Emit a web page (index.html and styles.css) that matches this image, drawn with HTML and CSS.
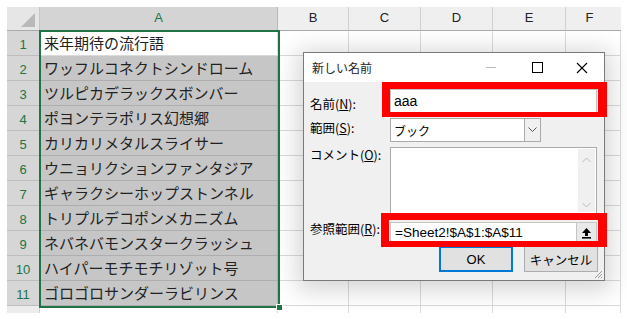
FILE: index.html
```html
<!DOCTYPE html>
<html lang="ja">
<head>
    <meta charset="UTF-8">
    <title>新しい名前</title>
    <link rel="stylesheet" href="styles.css">
</head>
<body>
    <div class="page">
        <div class="sheet">
            <div class="corner"><span class="tri"></span></div>
            <div class="colhead sel">A</div>
            <div class="colhead">B</div>
            <div class="colhead">C</div>
            <div class="colhead">D</div>
            <div class="colhead">E</div>
            <div class="colhead last">F</div>

            <div class="rowhead">1</div><div class="cell active">来年期待の流行語</div><div class="cell"></div><div class="cell"></div><div class="cell"></div><div class="cell"></div><div class="cell"></div>
            <div class="rowhead">2</div><div class="cell on">ワッフルコネクトシンドローム</div><div class="cell"></div><div class="cell"></div><div class="cell"></div><div class="cell"></div><div class="cell"></div>
            <div class="rowhead">3</div><div class="cell on">ツルピカデラックスボンバー</div><div class="cell"></div><div class="cell"></div><div class="cell"></div><div class="cell"></div><div class="cell"></div>
            <div class="rowhead">4</div><div class="cell on">ポヨンテラポリス幻想郷</div><div class="cell"></div><div class="cell"></div><div class="cell"></div><div class="cell"></div><div class="cell"></div>
            <div class="rowhead">5</div><div class="cell on">カリカリメタルスライサー</div><div class="cell"></div><div class="cell"></div><div class="cell"></div><div class="cell"></div><div class="cell"></div>
            <div class="rowhead">6</div><div class="cell on">ウニョリクションファンタジア</div><div class="cell"></div><div class="cell"></div><div class="cell"></div><div class="cell"></div><div class="cell"></div>
            <div class="rowhead">7</div><div class="cell on">ギャラクシーホップストンネル</div><div class="cell"></div><div class="cell"></div><div class="cell"></div><div class="cell"></div><div class="cell"></div>
            <div class="rowhead">8</div><div class="cell on">トリプルデコポンメカニズム</div><div class="cell"></div><div class="cell"></div><div class="cell"></div><div class="cell"></div><div class="cell"></div>
            <div class="rowhead">9</div><div class="cell on">ネバネバモンスタークラッシュ</div><div class="cell"></div><div class="cell"></div><div class="cell"></div><div class="cell"></div><div class="cell"></div>
            <div class="rowhead">10</div><div class="cell on">ハイパーモチモチリゾット号</div><div class="cell"></div><div class="cell"></div><div class="cell"></div><div class="cell"></div><div class="cell"></div>
            <div class="rowhead">11</div><div class="cell on">ゴロゴロサンダーラビリンス</div><div class="cell"></div><div class="cell"></div><div class="cell"></div><div class="cell"></div><div class="cell"></div>
            <div class="rowhead stub"></div><div class="cell stub"></div><div class="cell stub"></div><div class="cell stub"></div><div class="cell stub"></div><div class="cell stub"></div><div class="cell stub"></div>
        </div>

        <div class="selection"><span class="handle"></span></div>

        <div class="dialog">
            <div class="titlebar">
                <span class="title">新しい名前</span>
                <span class="tb-btn min"></span>
                <span class="tb-btn max"><span class="box"></span></span>
                <span class="tb-btn close">
                    <svg width="12" height="12" viewBox="0 0 12 12"><path d="M1 1 L11 11 M11 1 L1 11" stroke="#000" stroke-width="1.1"/></svg>
                </span>
            </div>
            <div class="body">
                <div class="row r-name">
                    <label>名前(<u>N</u>):</label>
                    <div class="field wide">aaa</div>
                </div>
                <div class="row r-scope">
                    <label>範囲(<u>S</u>):</label>
                    <div class="field select">
                        <span class="val">ブック</span>
                        <span class="drop">
                            <svg width="9" height="6" viewBox="0 0 9 6"><path d="M0.5 0.5 L4.5 4.5 L8.5 0.5" fill="none" stroke="#555" stroke-width="1"/></svg>
                        </span>
                    </div>
                </div>
                <div class="row r-comment">
                    <label>コメント(<u>O</u>):</label>
                    <div class="field area">
                        <div class="scroll">
                            <svg width="9" height="6" viewBox="0 0 9 6"><path d="M0.5 5 L4.5 1 L8.5 5" fill="none" stroke="#bbb" stroke-width="1"/></svg>
                            <svg width="9" height="6" viewBox="0 0 9 6"><path d="M0.5 1 L4.5 5 L8.5 1" fill="none" stroke="#bbb" stroke-width="1"/></svg>
                        </div>
                    </div>
                </div>
                <div class="row r-ref">
                    <label>参照範囲(<u>R</u>):</label>
                    <div class="field wide ref">
                        <span class="val">=Sheet2!$A$1:$A$11</span>
                        <span class="pick">
                            <svg width="11" height="12" viewBox="0 0 11 12"><path d="M5.5 1 L10 6 H7 V9 H4 V6 H1 Z" fill="#000"/><rect x="1" y="10" width="9" height="1.6" fill="#000"/></svg>
                        </span>
                    </div>
                </div>
                <div class="buttons">
                    <button class="btn ok">OK</button>
                    <button class="btn">キャンセル</button>
                </div>
            </div>
            <span class="grip">
                <svg width="10" height="10" viewBox="0 0 10 10"><path d="M9 2 L2 9 M9 5 L5 9 M9 8 L8 9" stroke="#999" stroke-width="1"/></svg>
            </span>
        </div>

        <div class="mark mark-name"></div>
        <div class="mark mark-ref"></div>
    </div>
</body>
</html>
```

FILE: styles.css
```css
*{
    margin:0;
    padding:0;
    box-sizing:border-box;
}
body{
    background:#fff;
    font-family:"Noto Sans CJK JP","Noto Sans",sans-serif;
    color:#222;
}
.page{
    position:relative;
    width:627px;
    height:319px;
    overflow:hidden;
    padding:7px 0 0 7px;
}
.sheet{
    display:grid;
    grid-template-columns:33px 238px 71px 72px 72px 73px 55px;
    grid-template-rows:24px repeat(11,25px) 7px;
}
.corner{
    position:relative;
    background:#e6e6e6;
    border-right:1px solid #c6c6c6;
    border-bottom:1px solid #ababab;
}
.tri{
    position:absolute;
    right:4px;
    bottom:3px;
    width:0;
    height:0;
    border-left:14px solid transparent;
    border-bottom:14px solid #b9b9b9;
}
.colhead{
    background:#efefef;
    border-right:1px solid #d0d0d0;
    border-bottom:1px solid #ababab;
    font-family:"Liberation Sans",Arial,sans-serif;
    font-size:13px;
    color:#222;
    display:flex;
    align-items:center;
    justify-content:center;
    padding-bottom:2px;
}
.colhead.sel{
    background:#d4d4d4;
    color:#217346;
    border-right:1px solid #b8b8b8;
}
.colhead.last{
    border-right:none;
    padding-right:8px;
}
.rowhead{
    background:#d6d6d6;
    border-right:1px solid #b8b8b8;
    border-bottom:1px solid #bdbdbd;
    color:#217346;
    font-family:"Liberation Sans",Arial,sans-serif;
    font-size:13px;
    display:flex;
    align-items:center;
    justify-content:center;
    padding-top:2px;
}
.rowhead.stub{
    background:#ececec;
    border-bottom:none;
    border-right:1px solid #d0d0d0;
}
.cell{
    border-right:1px solid #dadada;
    border-bottom:1px solid #dadada;
    font-size:15px;
    line-height:24px;
    padding-left:4px;
    white-space:nowrap;
    overflow:hidden;
    color:#222;
}
.cell.on{
    background:#c6c6c6;
    border-right-color:#b0b0b0;
    border-bottom-color:#aeaeae;
}
.cell.active{
    background:#fff;
}
.cell.stub{
    border-bottom:none;
}

.selection{
    position:absolute;
    left:39px;
    top:30px;
    width:241px;
    height:278px;
    border:2px solid #217346;
}
.handle{
    position:absolute;
    right:-5px;
    bottom:-5px;
    width:7px;
    height:7px;
    background:#217346;
    border:1px solid #fff;
}

/* dialog */
.dialog{
    position:absolute;
    left:303px;
    top:52px;
    width:302px;
    height:229px;
    background:#f0f0f0;
    border:1px solid #7a7a7a;
    box-shadow:0 4px 22px 6px rgba(0,0,0,.16);
    font-family:"Noto Sans CJK JP","Noto Sans",sans-serif;
    color:#000;
    font-size:12px;
}
.titlebar{
    height:29px;
    background:#fff;
    display:flex;
    align-items:center;
    padding-left:8px;
}
.title{
    flex:1;
    font-size:12px;
    color:#222;
}
.tb-btn{
    width:46px;
    height:29px;
    display:flex;
    align-items:center;
    justify-content:center;
}
.tb-btn.min::before{
    content:"";
    width:10px;
    height:1px;
    background:#bbb;
}
.tb-btn.max .box{
    width:11px;
    height:11px;
    border:1px solid #000;
}
.tb-btn.close{
    width:44px;
}
.body{
    position:relative;
    padding:0 6px 0 6px;
}
.row{
    display:flex;
    align-items:flex-start;
}
.row label{
    width:80px;
    font-size:12.5px;
    line-height:16px;
}
.field{
    background:#fff;
    border:1px solid #7a7a7a;
}
.wide{
    width:207px;
}
.r-name{
    margin-top:7px;
    height:29px;
}
.r-name label{
    margin-top:7px;
}
.r-name .field{
    height:24px;
    font-family:"Liberation Sans",Arial,sans-serif;
    font-size:14px;
    line-height:22px;
    padding-left:3px;
    border-color:#c4c4c4;
}
.r-scope{
    height:29px;
}
.r-scope label{
    margin-top:2px;
}
.select{
    width:151px;
    height:24px;
    display:flex;
    align-items:center;
    border-color:#aaa;
}
.select .val{
    flex:1;
    padding-left:3px;
    font-size:12px;
}
.drop{
    width:16px;
    height:22px;
    border-left:1px solid #aaa;
    background:#f0f0f0;
    display:flex;
    align-items:center;
    justify-content:center;
}
.r-comment{
    height:75px;
}
.r-comment label{
    margin-top:0;
}
.area{
    width:207px;
    height:67px;
    border-color:#aaa;
    display:flex;
    justify-content:flex-end;
    padding:1px;
}
.scroll{
    width:17px;
    background:#f0f0f0;
    display:flex;
    flex-direction:column;
    justify-content:space-between;
    align-items:center;
    padding:8px 0 4px;
}
.r-ref{
    height:24px;
}
.r-ref label{
    margin-top:-1px;
}
.ref{
    height:21px;
    display:flex;
    align-items:center;
    border-color:#c4c4c4;
}
.ref .val{
    flex:1;
    font-family:"Liberation Sans",Arial,sans-serif;
    font-size:13.5px;
    padding-left:4px;
}
.pick{
    width:20px;
    height:19px;
    background:#e9e9e9;
    border-left:1px solid #c4c4c4;
    display:flex;
    align-items:center;
    justify-content:center;
}
.buttons{
    display:flex;
    justify-content:flex-end;
    gap:11px;
    padding-right:0;
    margin-right:0;
}
.btn{
    width:74px;
    height:26px;
    background:#e1e1e1;
    border:1px solid #adadad;
    font-family:"Noto Sans CJK JP","Noto Sans",sans-serif;
    font-size:12.5px;
    color:#000;
}
.btn.ok{
    border:2px solid #0078d7;
    font-family:"Liberation Sans",Arial,sans-serif;
    font-size:13px;
}
.grip{
    position:absolute;
    right:1px;
    bottom:1px;
    line-height:0;
}

/* annotations */
.mark{
    position:absolute;
    border:7px solid #ff0000;
}
.mark-name{
    left:382px;
    top:82px;
    width:225px;
    height:35px;
    border-width:7px 9px 5px 8px;
}
.mark-ref{
    left:381px;
    top:213px;
    width:226px;
    height:34px;
    border-width:7px 9px 6px 8px;
}
```
